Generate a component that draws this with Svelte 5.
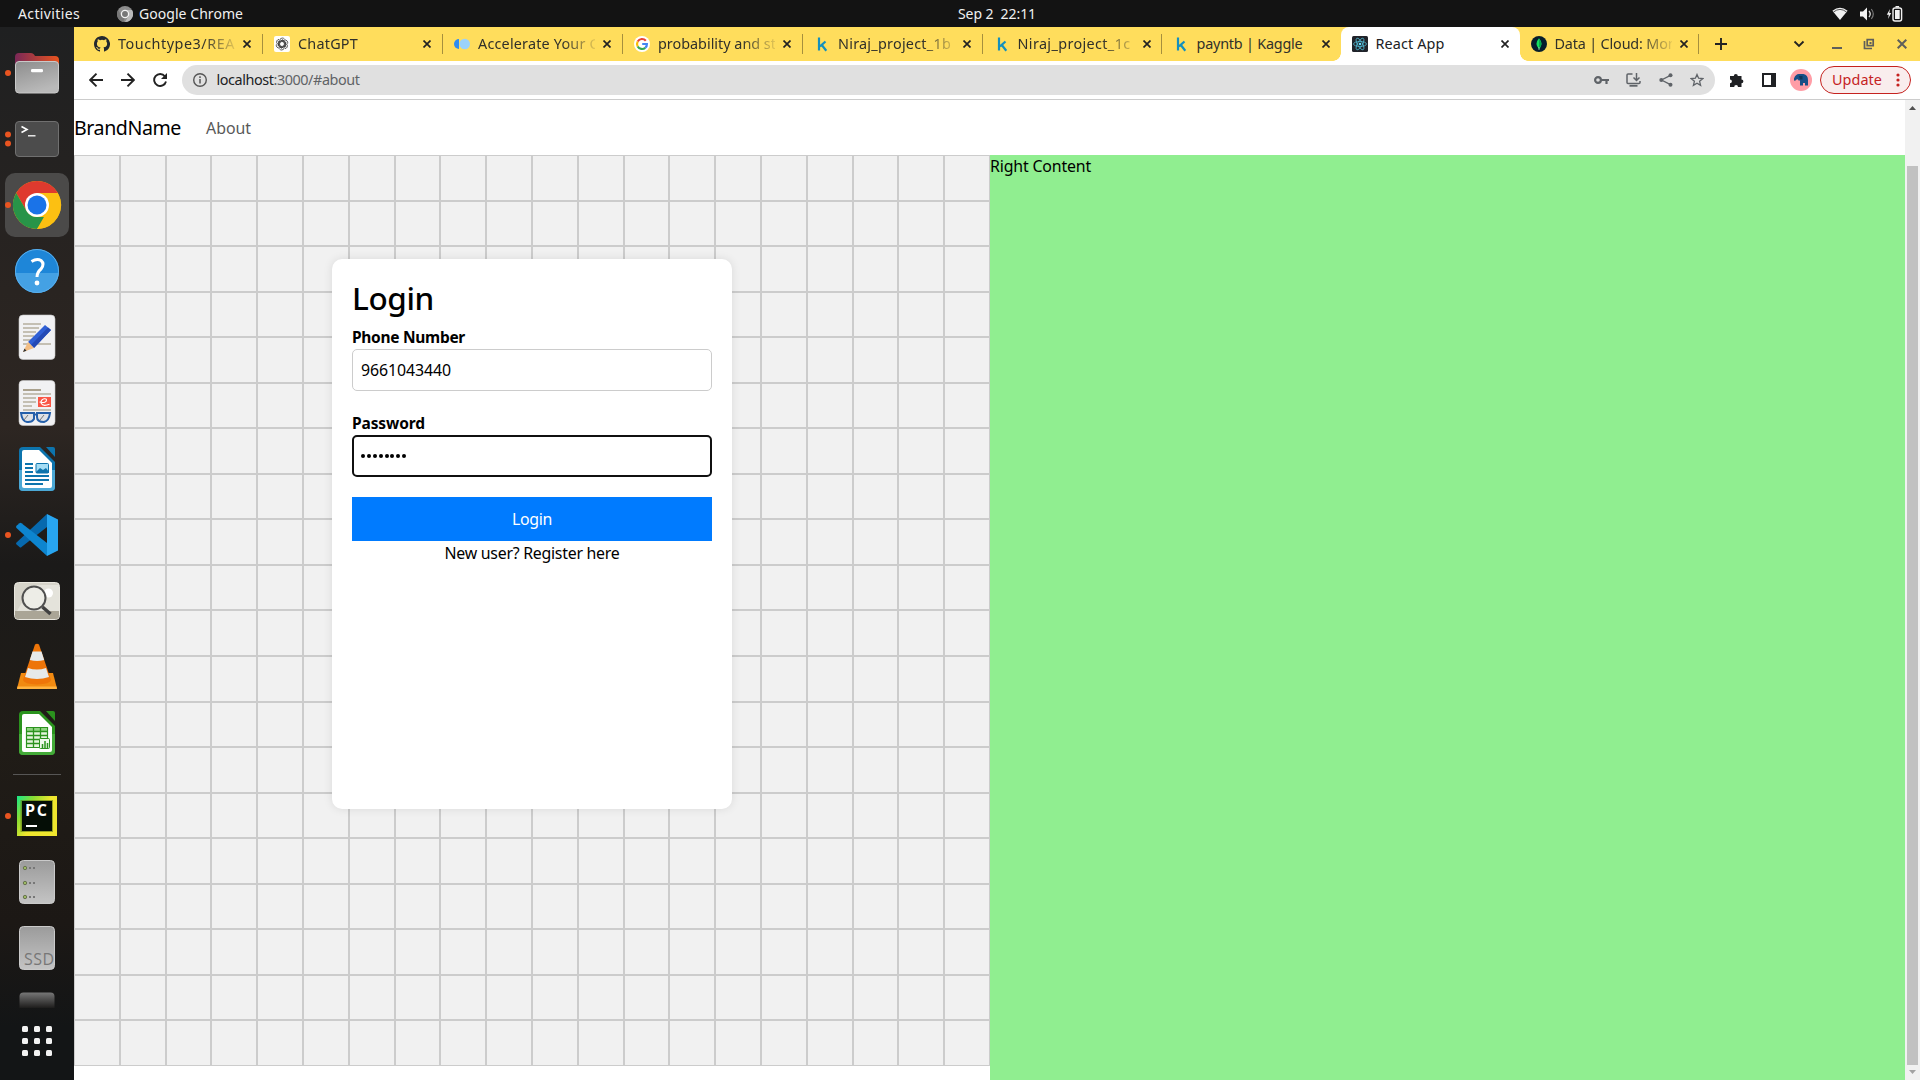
<script>
  // Spreads a label's letters so that it fills the given width in pixels.
  function fit(node, width) {
    const chars = node.textContent.length;
    const natural = node.getBoundingClientRect().width;
    node.style.letterSpacing = `${(width - natural) / chars}px`;
  }

  const tabs = [
    { title: 'Touchtype3/REAL', icon: 'github', w: 125 },
    { title: 'ChatGPT', icon: 'gpt', w: 60 },
    { title: 'Accelerate Your Ca', icon: 'dots', w: 129 },
    { title: 'probability and sta', icon: 'google', w: 126 },
    { title: 'Niraj_project_1b', icon: 'kaggle', w: 113 },
    { title: 'Niraj_project_1c', icon: 'kaggle', w: 113 },
    { title: 'payntb | Kaggle', icon: 'kaggle', w: 106 },
    { title: 'React App', icon: 'react', w: 69, active: true },
    { title: 'Data | Cloud: Mon', icon: 'mongo', w: 122 },
  ];

  const cells = Array.from({ length: 400 });
  const dockApps = [
    { id: 'files', dots: [33] },
    { id: 'terminal', dots: [28.5, 37.5] },
    { id: 'chrome', dots: [33] },
    { id: 'help' },
    { id: 'editor' },
    { id: 'documents' },
    { id: 'writer' },
    { id: 'code', dots: [33] },
    { id: 'viewer' },
    { id: 'vlc' },
    { id: 'calc' },
    { id: 'separator' },
    { id: 'pycharm', dots: [33] },
    { id: 'drive' },
    { id: 'ssd' },
    { id: 'partial' },
  ];
  const grid = [25, 37, 49];
</script>

<div class="desktop">
  <header class="topbar">
    <div class="left">
      <span class="activities"><span class="t" use:fit={62}>Activities</span></span>
      <svg class="app" width="16" height="16" viewBox="0 0 16 16">
        <circle cx="8" cy="8" r="8" fill="#8d8d8d" />
        <path d="M8 4h7A8 8 0 0 1 8 16l3.5-6z" fill="#b9b9b9" />
        <path d="M1.2 4 4.6 10 8 12 6 16A8 8 0 0 1 1.2 4z" fill="#777" />
        <circle cx="8" cy="8" r="3.6" fill="#777" stroke="#f4f4f4" stroke-width="1.3" />
      </svg>
      <span class="t" use:fit={104}>Google Chrome</span>
    </div>
    <span class="clock t" use:fit={78}>Sep 2&nbsp; 22:11</span>
    <div class="status">
      <svg width="16" height="14" viewBox="0 0 16 14"><path d="M.4 3.8Q8-2.3 15.6 3.8L8 13z" fill="#f2f2f2" /><path d="M1.5 5Q8-.2 14.5 5" fill="none" stroke="#555" stroke-width="1" /></svg>
      <svg width="16" height="14" viewBox="0 0 16 14"><path d="M1 4.5h3L8 .5v13L4 9.5H1z" fill="#f2f2f2" /><path d="M10 4q2.5 3 0 6" fill="none" stroke="#ddd" stroke-width="1.3" /><path d="M12.3 2q4 5 0 10" fill="none" stroke="#777" stroke-width="1.2" /></svg>
      <svg width="17" height="16" viewBox="0 0 17 16"><path d="M4 3 .8 8.800h2L2 13l3.200-6H3.300z" fill="#f2f2f2" /><rect x="7" y="2" width="8.600" height="13" rx="2" fill="none" stroke="#f2f2f2" stroke-width="1.400" /><path d="M9 4h4.700v9H9zM9.500 0h3.600v1.500H9.500z" fill="#f2f2f2" /></svg>
    </div>
  </header>

  <div class="body">
    <aside class="dock">
      {#each dockApps as app}
        {#if app.id === 'separator'}
          <div class="rule"></div>
        {:else}
          <svg class="slot" width="74" height={app.id === 'partial' ? 27 : 66} viewBox={app.id === 'partial' ? '0 0 74 27' : '0 0 74 66'}>
            {#if app.id === 'files'}
              <defs>
                <linearGradient id="fb"><stop offset="0" stop-color="#7a2857" /><stop offset="1" stop-color="#e9541f" /></linearGradient>
                <linearGradient id="ff" x2="0.4" y2="1"><stop offset="0" stop-color="#8d8d8d" /><stop offset="1" stop-color="#b9b9b9" /></linearGradient>
              </defs>
              <path d="M15 17q0-4 4-4h12q2 0 3 1.500l1 1.500h20q4 0 4 4v16H15z" fill="url(#fb)" />
              <rect x="15.500" y="21.500" width="43" height="31.500" rx="3.500" fill="url(#ff)" stroke="#c9c9c9" stroke-width="1" />
              <rect x="31" y="29" width="12" height="3.300" rx="1.200" fill="#fff" />
            {:else if app.id === 'terminal'}
              <rect x="15.500" y="15.500" width="43" height="35" rx="3.500" fill="#4c4c4c" stroke="#707070" />
              <path d="m21.500 20.500 5.500 3-5.500 3" fill="none" stroke="#fff" stroke-width="1.600" />
              <path d="M28 29.800h7.500" stroke="#fff" stroke-width="1.300" />
            {:else if app.id === 'chrome'}
              <rect x="5" y="1" width="64" height="64" rx="10" fill="#4b4a49" />
              <circle cx="37" cy="33" r="24" fill="#fbbc05" />
              <path d="M16.200 21a24 24 0 0 1 41.600 0H37L26.600 39z" fill="#df3a2e" />
              <path d="M16.200 21 26.600 39q4 6 10.400 6h10.400L37 57A24 24 0 0 1 16.200 21z" fill="#289448" />
              <path d="M47.400 39 37 57a24 24 0 0 0 20.800-36H37z" fill="#fcc012" />
              <circle cx="37" cy="33" r="12" fill="#fff" /><circle cx="37" cy="33" r="9.500" fill="#1a73e8" />
            {:else if app.id === 'help'}
              <circle cx="37" cy="33" r="22" fill="#1e86d8" />
              <path d="M15.100 35h43.800a22 22 0 0 1-43.800 0z" fill="#44a1e4" />
              <circle cx="37" cy="33" r="21.500" fill="none" stroke="#5aaeea" stroke-width="1" />
              <path d="M31.500 23.500q5.500-3.500 9.500-1 4 3.500 0 8.500-4 3.500-4 8" fill="none" stroke="#fff" stroke-width="3" />
              <circle cx="37" cy="45" r="2.400" fill="#fff" />
            {:else if app.id === 'editor'}
              <rect x="19" y="11" width="36" height="44.500" rx="4" fill="#f1f1f3" stroke="#c8c8c8" stroke-width=".6" />
              <path d="M23 20h18M23 24h16M23 28h13M23 32h11M23 36h9M23 40h28" stroke="#c4bfb3" stroke-width="2" />
              <path d="m28 38 17-17 6 5-17 18z" fill="#2f5fd5" /><path d="m31 41 17-17.500 3 2.500-17 18z" fill="#2349b5" />
              <path d="m28 38 6 6-11 4z" fill="#f2bd83" /><path d="m24.500 44.500-1.500 3.500 3.500-1.300z" fill="#333" />
            {:else if app.id === 'documents'}
              <rect x="19" y="10.500" width="36" height="45" rx="4" fill="#f1f1f3" stroke="#c8c8c8" stroke-width=".6" />
              <path d="M23 20h18" stroke="#aaa18e" stroke-width="2" /><path d="M23 24h28M23 28h13M23 32h13M23 36h9M23 40h28" stroke="#c4bfb3" stroke-width="2" />
              <path d="M38 27h13v10H38z" fill="#fa5545" /><path d="M39.500 32q7 1.500 7-2 0-1.500-2.300-1.200-3.700 1-3 4.500 1.500 3.500 8.300 1" fill="none" stroke="#fff" stroke-width="1.100" />
              <path d="M21 43h13v6q-2 3.500-7 3-5-.500-6-9zm16 0h13q-1 8-6 9-7 0-7-5z" fill="#d5dade" fill-opacity=".7" stroke="#245faa" stroke-width="2" /><path d="M33 44.500h4" stroke="#245faa" stroke-width="2" /><path d="m24 50 4-5M40 50l4-5" stroke="#777" />
            {:else if app.id === 'writer' || app.id === 'calc'}
              {@const main = app.id === 'writer' ? '#0d74ad' : '#2b931e'}
              {@const low = app.id === 'writer' ? '#4ba8d5' : '#43aa38'}
              <path d="M23 11h17l15 15v25q0 4-4 4H23q-4 0-4-4V15q0-4 4-4z" fill={main} />
              <path d="M19 34h36v17q0 4-4 4H23q-4 0-4-4z" fill={low} />
              <path d="M24 14h15l13 13v23q0 2-2 2H24q-2 0-2-2V16q0-2 2-2z" fill="#fff" />
              <path d="M46 11h7q2 0 2 2v8z" fill={main} />
              {#if app.id === 'writer'}
                <path d="M25 28h8M25 32h8M25 36h8M25 40h24M25 44h24M25 48h18" stroke="#0d74ad" stroke-width="2" />
                <rect x="36" y="27.500" width="12.500" height="9.500" rx="1" fill="#a5ddf5" stroke="#0d74ad" /><path d="m36 36 4-4 3 2 3-2 3 4v1H36z" fill="#0d74ad" />
              {:else}
                <path d="M26.500 27.500h21v20h-21z" fill="#e5f5dd" stroke="#2b931e" stroke-width="1.200" /><path d="M27 28h20v3H27z" fill="#91d483" />
                <path d="M26.500 31.500h21M26.500 35.500h21M26.500 39.500h21M26.500 43.500h21M33.500 27.500v20M40.500 27.500v20" stroke="#2b931e" stroke-width="1.300" />
                <rect x="39.500" y="38.500" width="10" height="10" rx="1" fill="#eff9ec" stroke="#2b931e" /><path d="M42.500 48v-4M45 48v-7M47.500 48v-5" stroke="#2b931e" stroke-width="1.500" />
              {/if}
            {:else if app.id === 'code'}
              <path d="M47 12 16.500 40.500q-1 1 0 2l3 2.500q1 1 2 0L47 25z" fill="#0769ae" />
              <path d="m47 54-30.500-28q-1-1 0-2.300l3-2.500q1-.700 2 0L47 41z" fill="#0d85cf" />
              <path d="m47 12 11 5.500v31L47 54z" fill="#28a5f0" />
            {:else if app.id === 'viewer'}
              <rect x="14.500" y="14.500" width="45" height="37" rx="4" fill="#d6d4ca" stroke="#e9e7df" />
              <path d="m17 43 15-26h27v26z" fill="#e4e3db" /><path d="M15 43h44v5q0 3-3 3H18q-3 0-3-3z" fill="#aaa596" />
              <circle cx="48.500" cy="25" r="4.500" fill="#fff" />
              <circle cx="34" cy="30" r="11.500" fill="#efefea" fill-opacity=".8" stroke="#4f4f4f" stroke-width="2" /><path d="m42.500 39 8 7" stroke="#404040" stroke-width="3.500" />
            {:else if app.id === 'vlc'}
              <path d="M21 39h32l4 15.500H17z" fill="#f18a11" /><path d="M17.500 52.500h39l.5 2.500H17z" fill="#ffb340" />
              <path d="M35 10.500q2-1.500 4 0L51 46q-1 4-14 4.500-13-.5-14-4.500z" fill="#ee7509" />
              <path d="M32.500 17.500h9L44.200 26q-7 2-14.400 0zM28 34q9 3 18 0l3 9q-12 4-24 0z" fill="#e6e9ea" />
            {:else if app.id === 'pycharm'}
              <defs><linearGradient id="pc" x2="1" y2=".7"><stop offset="0" stop-color="#16e88b" /><stop offset=".3" stop-color="#8bdc32" /><stop offset=".6" stop-color="#efe62e" /></linearGradient></defs>
              <path d="M17 13h40v40H17z" fill="url(#pc)" /><path d="M20.500 17h32.500v32H20.500z" fill="#5b7518" fill-opacity=".6" /><path d="M22 18h30v30H22z" fill="#050e06" />
              <text class="pc" x="25" y="33" textLength="22">PC</text><path d="M26 43h11" stroke="#fff" stroke-width="2" />
            {:else}
              <defs>
                <linearGradient id="dr" x2="0" y2="1"><stop offset="0" stop-color="#9b9b9b" /><stop offset="1" stop-color="#c4c4c4" /></linearGradient>
                <linearGradient id="pt" x2="0" y2=".37"><stop offset="0" stop-color="#777" /><stop offset="1" stop-color="#1b1a19" /></linearGradient>
              </defs>
              <rect x="19.500" y="11.500" width="35" height="43" rx="4" fill={app.id === 'partial' ? 'url(#pt)' : 'url(#dr)'} stroke={app.id === 'partial' ? 'none' : '#cacaca'} />
              {#if app.id === 'drive'}
                {#each [19, 34, 48] as y}
                  <circle cx="25" cy={y} r="1.700" fill="#9dba64" stroke="#687350" /><path d="M29 {y}h2m2 0h2" stroke="#777" stroke-width="2" />
                {/each}
              {:else if app.id === 'ssd'}
                <text class="ssd" x="24" y="49.500" textLength="30">SSD</text>
              {/if}
            {/if}
            {#each app.dots ?? [] as y}
              <circle cx="8" cy={y} r="3" fill="#e95420" />
            {/each}
          </svg>
        {/if}
      {/each}
      <svg class="slot" width="74" height="66" viewBox="0 0 74 66">
        {#each grid as y}{#each grid as x}<rect x={x - 3} y={y - 7} width="6" height="6" rx="1.500" fill="#f2f2f2" />{/each}{/each}
      </svg>
    </aside>

    <main class="browser">
      <div class="tabs">
        {#each tabs as tab, i}
          <div class="tab" class:active={tab.active} class:plain={i === 6} class:narrow={i > 4}>
            <svg width="16" height="16" viewBox="0 0 16 16">
              {#if tab.icon === 'github'}
                <path fill="#24292f" d="M8 0C3.580 0 0 3.580 0 8c0 3.540 2.290 6.530 5.470 7.590.4.070.55-.17.55-.38 0-.19-.01-.82-.01-1.490-2.010.37-2.530-.49-2.690-.94-.09-.23-.48-.94-.82-1.130-.28-.15-.68-.52-.01-.53.63-.01 1.080.58 1.230.82.72 1.210 1.870.87 2.330.66.07-.52.28-.87.51-1.070-1.780-.2-3.640-.89-3.640-3.950 0-.87.31-1.590.82-2.150-.08-.2-.36-1.020.08-2.120 0 0 .67-.21 2.200.82a7.600 7.600 0 0 1 4 0c1.530-1.040 2.200-.82 2.200-.82.44 1.100.16 1.920.08 2.120.51.56.82 1.270.82 2.150 0 3.070-1.870 3.750-3.650 3.950.29.25.54.73.54 1.480 0 1.070-.01 1.930-.01 2.200 0 .21.15.46.55.38A8 8 0 0 0 8 0z" />
              {:else if tab.icon === 'gpt'}
                <rect width="16" height="16" rx="2" fill="#fff" />
                {#each [0, 60, 120, 180, 240, 300] as a}
                  <path d="M5.700 9.300V4.400q.300-2.200 2.500-2.400 1.400 0 2.300 1M5.700 5.800l2.500-1.500 4.200 2.400" fill="none" stroke="#333" stroke-width=".75" transform="rotate({a} 8 8)" />
                {/each}
              {:else if tab.icon === 'dots'}
                <path d="M5 3v10A5 5 0 0 1 5 3z" fill="#2d8cf0" /><circle cx="10.700" cy="8" r="5.300" fill="#9bd2fa" />
              {:else if tab.icon === 'google'}
                <circle cx="8" cy="8" r="8" fill="#fff" />
                <g fill="none" stroke-width="2.200"><path d="M11.800 4.700A5 5 0 0 0 3.700 5.500" stroke="#ea4335" /><path d="M3.700 5.500a5 5 0 0 0 0 5" stroke="#fbbc05" /><path d="M3.700 10.500a5 5 0 0 0 7.600 1.300" stroke="#34a853" /><path d="M11.300 11.800Q13 10.300 12.900 8H8.200" stroke="#4285f4" /></g>
              {:else if tab.icon === 'kaggle'}
                <path d="M5 1.500v13M11.500 5.500 6 10.300M7.600 8.700l4.700 6" stroke="#1490bd" stroke-width="2.200" fill="none" />
              {:else if tab.icon === 'react'}
                <rect width="16" height="16" rx="1.500" fill="#20232a" />
                <g fill="none" stroke="#4fb5ce" stroke-width=".8"><ellipse cx="8" cy="8" rx="6.500" ry="2.500" /><ellipse cx="8" cy="8" rx="6.500" ry="2.500" transform="rotate(60 8 8)" /><ellipse cx="8" cy="8" rx="6.500" ry="2.500" transform="rotate(120 8 8)" /></g><circle cx="8" cy="8" r="1.300" fill="#61dafb" />
              {:else}
                <circle cx="8" cy="8" r="8" fill="#061e2c" /><path d="M8 2.300q5 5.500 0 10.700Q3 7.800 8 2.300z" fill="#14e060" /><path d="M8 3q4.500 5 0 10.500z" fill="#07a94c" /><path d="M8 11v3" stroke="#b7e6c8" stroke-width=".7" />
              {/if}
            </svg>
            <span class="title"><span class="t" use:fit={tab.w}>{tab.title}</span></span>
            <svg width="8" height="8" viewBox="0 0 8 8"><path d="m.5.5 7 7m0-7-7 7" stroke="#222" stroke-width="1.700" /></svg>
          </div>
        {/each}
        <svg class="plus" width="12" height="12" viewBox="0 0 12 12"><path d="M6 0v12M0 6h12" stroke="#222" stroke-width="1.900" /></svg>
        <div class="winctl">
          <svg width="12" height="12" viewBox="0 0 12 12"><path d="m1.500 3.500 4.500 4.500 4.500-4.500" fill="none" stroke="#222" stroke-width="1.800" /></svg>
          <svg width="10" height="12" viewBox="0 0 10 12"><path d="M0 10h10" stroke="#5f5f5a" stroke-width="2" /></svg>
          <svg width="12" height="12" viewBox="0 0 12 12"><path d="M4.200 1.700h6v6h-6zM1.500 3v7.500H9" fill="none" stroke="#5f5f5a" stroke-width="1.700" /><path d="M6.500 4h2v2h-2z" fill="#5f5f5a" /></svg>
          <svg width="10" height="10" viewBox="0 0 10 10"><path d="m.7.7 8.600 8.600m0-8.600L.7 9.300" stroke="#5f5f5a" stroke-width="2" /></svg>
        </div>
      </div>

      <div class="toolbar">
        <svg width="14" height="14" viewBox="0 0 14 14"><path d="M14 7H1.500M7.500.7 1.200 7l6.300 6.300" fill="none" stroke="#222" stroke-width="1.900" /></svg>
        <svg width="14" height="14" viewBox="0 0 14 14"><path d="M0 7h12.500M6.500.7 12.800 7l-6.300 6.300" fill="none" stroke="#222" stroke-width="1.900" /></svg>
        <svg width="14" height="14" viewBox="0 0 14 14"><path d="M11.900 3.300A6 6 0 1 0 13 8.500" fill="none" stroke="#222" stroke-width="1.900" /><path d="M14 0v6H8z" fill="#222" /></svg>
        <div class="omnibox">
          <svg width="14" height="14" viewBox="0 0 14 14"><circle cx="7" cy="7" r="6.300" fill="none" stroke="#555" stroke-width="1.400" /><path d="M7 6v4.500M7 3.300V5" stroke="#555" stroke-width="1.500" /></svg>
          <span class="url t" use:fit={143}><b>localhost</b>:3000/#about</span>
          <svg width="15" height="10" viewBox="0 0 15 10"><circle cx="4" cy="5" r="2.900" fill="none" stroke="#5f6368" stroke-width="2.200" /><path d="M7 5h8M12.500 5v4" stroke="#5f6368" stroke-width="2.200" /></svg>
          <svg width="15" height="14" viewBox="0 0 15 14"><path d="M6.500 1H2Q1 1 1 2v7.500q0 1 1 1h11q1 0 1-1V8" fill="none" stroke="#5f6368" stroke-width="1.500" /><path d="M10.500 0v7M7.500 4.500l3 3 3-3" fill="none" stroke="#5f6368" stroke-width="1.500" /><path d="M3.500 12.800h8" stroke="#5f6368" stroke-width="1.800" /></svg>
          <svg width="14" height="14" viewBox="0 0 14 14"><path d="M11.500 2.300 2.500 7l9 4.700" fill="none" stroke="#5f6368" stroke-width="1.300" /><g fill="#5f6368"><circle cx="11.500" cy="2.300" r="2" /><circle cx="2.300" cy="7" r="2" /><circle cx="11.500" cy="11.700" r="2" /></g></svg>
          <svg width="14" height="14" viewBox="0 0 14 14"><path d="m7 1.500 1.600 3.700 4.200.4-3.200 2.700 1 4.100L7 10.200l-3.600 2.200 1-4.100L1.200 5.600l4.200-.4z" fill="none" stroke="#5f6368" stroke-width="1.300" /></svg>
        </div>
        <svg width="15" height="15" viewBox="0 0 15 15"><path d="M4.800 3a2 2 0 0 1 4 0h3.700v3.400a1.900 1.900 0 0 1 0 3.800v3.800H9a1.900 1.900 0 0 0-3.800 0H1v-3.800a1.900 1.900 0 0 0 0-3.800V3z" fill="#202124" /></svg>
        <svg width="14" height="14" viewBox="0 0 14 14"><path d="M1 1h12v12H1z" fill="#fff" stroke="#202124" stroke-width="2" /><path d="M9 1h4v12H9z" fill="#202124" /></svg>
        <svg width="22" height="22" viewBox="0 0 22 22"><circle cx="11" cy="11" r="11" fill="#ff9da6" /><path d="M4 9.500Q5.500 5 9 5h4.500Q18 6 18 11v5.500h-3V14h-2v2.500h-3v-5H8.500q-.5-2-2-1-.5 1.500-2.500 1z" fill="#174f86" /><path d="M9 7h3.500v3.500H10z" fill="#123456" /></svg>
        <div class="update"><span class="t" use:fit={50}>Update</span><svg width="4" height="14" viewBox="0 0 4 14"><g fill="#c5221f"><circle cx="2" cy="2" r="1.600" /><circle cx="2" cy="7" r="1.600" /><circle cx="2" cy="12" r="1.600" /></g></svg></div>
      </div>

      <div class="viewport">
        <div class="page">
          <nav><span class="brand"><span class="t" use:fit={107}>BrandName</span></span><span class="about"><span class="t" use:fit={45}>About</span></span></nav>
          <div class="split">
            <section class="pane">
              <div class="cells">{#each cells as _}<i></i>{/each}</div>
              <form class="card">
                <h2><span class="t" use:fit={82}>Login</span></h2>
                <div class="label"><span class="t" use:fit={113}>Phone Number</span></div>
                <div class="input"><span class="t" use:fit={90}>9661043440</span></div>
                <div class="label"><span class="t" use:fit={73}>Password</span></div>
                <div class="input focus"><span class="secret">{#each { length: 8 } as _}<i></i>{/each}</span></div>
                <div class="submit"><span class="t" use:fit={40}>Login</span></div>
                <div class="register"><span class="t" use:fit={175}>New user? Register here</span></div>
              </form>
            </section>
            <section class="right"><span class="t" use:fit={101}>Right Content</span></section>
          </div>
        </div>
        <div class="scrollbar">
          <svg width="15" height="15" viewBox="0 0 15 15"><path d="m4 10 3.500-4L11 10z" fill="#505050" /></svg>
          <div class="thumb"></div>
          <svg width="15" height="15" viewBox="0 0 15 15"><path d="m4 5 3.500 4L11 5z" fill="#a3a3a3" /></svg>
        </div>
      </div>
    </main>
  </div>
</div>

<style>
  :global(body) { margin: 0; overflow: hidden; }
  * { box-sizing: border-box; }
  svg { display: block; flex: none; }
  .t { display: inline-block; white-space: pre; }
  .desktop { width: 1920px; height: 1080px; display: flex; flex-direction: column; overflow: hidden; font-family: 'Noto Sans', 'Open Sans', sans-serif; color: #000; background: #131313; }
  .topbar { height: 27px; flex: none; display: grid; grid-template-columns: 1fr auto 1fr; align-items: center; background: #131313; color: #f0f0f0; font-size: 14px; line-height: 26px; padding-right: 17px; }
  .left { display: flex; align-items: center; padding-left: 18px; }
  .activities { margin-right: 37px; }
  .app { margin-right: 6px; }
  .clock { margin-left: 91px; line-height: 25px; }
  .status { display: flex; justify-content: flex-end; align-items: center; gap: 11px; }
  .body { flex: 1; display: flex; min-height: 0; }
  .dock { width: 74px; flex: none; padding-top: 13px; display: flex; flex-direction: column; background: linear-gradient(#1f2021 0, #292421 25%, #2d2622 38%, #1b1a19 51%, #201c17 68%, #1c1815 85%, #131516 95%); }
  .rule { height: 17px; margin: 0 13px; flex: none; background: linear-gradient(#575655, #575655) 0 8px / 100% 1px no-repeat; }
  .pc { font: 700 16px 'Open Sans', sans-serif; fill: #fff; }
  .ssd { font: 400 16px 'Open Sans', sans-serif; fill: #777; }
  .browser { flex: 1; min-width: 0; display: flex; flex-direction: column; background: #fff; }
  .tabs { height: 34px; flex: none; display: flex; align-items: center; background: #ffdd5c; padding-left: 9px; font-size: 14.400px; color: #30302a; }
  .tab { width: 180px; height: 34px; flex: none; display: flex; align-items: center; padding: 0 11px; background: linear-gradient(#a68f3d, #a68f3d) 100% 7px / 1px 20px no-repeat; }
  .tab.narrow { width: 179px; padding: 0 10.500px; }
  .tab.plain { background: none; }
  .tab.active { background: #fff; color: #202124; border-radius: 8px 8px 0 0; position: relative; }
  .tab.active::before, .tab.active::after { content: ''; position: absolute; bottom: 0; width: 8px; height: 8px; }
  .tab.active::before { left: -8px; background: radial-gradient(circle at 0 0, transparent 7.500px, #fff 8px); }
  .tab.active::after { right: -8px; background: radial-gradient(circle at 100% 0, transparent 7.500px, #fff 8px); }
  .title { width: 117px; margin: 0 8px; overflow: hidden; line-height: 32px; -webkit-mask-image: linear-gradient(90deg, #000 84px, transparent 122px); mask-image: linear-gradient(90deg, #000 84px, transparent 122px); }
  .tab.plain .title, .tab.active .title { -webkit-mask-image: none; mask-image: none; }
  .plus { margin-left: 16px; }
  .winctl { margin-left: auto; display: flex; align-items: center; padding-right: 13px; }
  .winctl svg:nth-child(2) { margin-left: 27px; }
  .winctl svg:nth-child(3) { margin-left: 21px; }
  .winctl svg:nth-child(4) { margin-left: 22px; }
  .toolbar { height: 39px; flex: none; display: flex; align-items: center; padding: 0 9px 0 15px; gap: 18px; border-bottom: 1px solid #ccc; font-size: 14.400px; }
  .omnibox { height: 30px; width: 1533px; margin-left: -3px; flex: none; display: flex; align-items: center; gap: 17.500px; padding: 0 11px; border-radius: 15px; background: #e0e0e0; }
  .url { color: #606366; margin-left: -8px; margin-right: auto; line-height: 28px; }
  .url b { font-weight: 400; color: #202124; }
  .toolbar > svg:nth-of-type(4) { margin-left: -4px; }
  .toolbar > svg:nth-of-type(6) { margin-left: -4px; }
  .update { width: 91px; height: 28px; margin-left: -10px; flex: none; display: flex; align-items: center; justify-content: space-between; padding: 0 10px 0 11px; border: 1px solid #c5221f; border-radius: 14px; background: #f9eded; color: #c5221f; line-height: 24px; }
  .viewport { flex: 1; min-height: 0; display: flex; font-size: 15.900px; line-height: 24px; }
  .page { width: 1831px; flex: none; }
  nav { height: 55px; display: flex; align-items: center; }
  .brand { font-size: 19.600px; line-height: 30px; }
  .about { margin-left: 25px; color: #595959; }
  .split { height: 925px; display: flex; }
  .pane { width: 916px; height: 911px; display: grid; }
  .cells { grid-area: 1 / 1; display: grid; grid-template: repeat(20, 1fr) / repeat(20, 1fr); }
  .cells i { border: 1px solid #ccc; background: #f1f1f1; }
  .card { grid-area: 1 / 1; width: 400px; height: 550px; margin: 104px 0 0 258px; padding: 20px; background: #fff; border-radius: 10px; box-shadow: 0 0 10px rgba(0, 0, 0, .1); }
  h2 { margin: 0 0 8px; font-size: 31.500px; line-height: 38px; font-weight: 500; }
  .label { height: 24px; display: flex; font-weight: 700; font-size: 15.500px; line-height: 24px; }
  .input { height: 42px; padding: 0 8px 1px; margin-bottom: 20px; border: 1px solid #ccc; border-radius: 5px; display: flex; align-items: center; line-height: 38px; }
  .input.focus { border: 2px solid #101010; padding: 0 7px 1px; }
  .secret { display: flex; gap: 1.900px; }
  .secret i { width: 4px; height: 4px; border-radius: 50%; background: #000; }
  .submit { height: 44px; padding-bottom: 1px; display: flex; align-items: center; justify-content: center; color: #fff; background: #007bff; }
  .register { display: flex; justify-content: center; line-height: 24px; }
  .right { flex: 1; display: flex; align-items: flex-start; background: #90ee90; line-height: 23px; }
  .scrollbar { width: 15px; background: #f1f1f1; display: flex; flex-direction: column; align-items: center; }
  .thumb { width: 11px; height: 899px; margin: 51px 0 0; background: #c1c1c1; }
</style>
